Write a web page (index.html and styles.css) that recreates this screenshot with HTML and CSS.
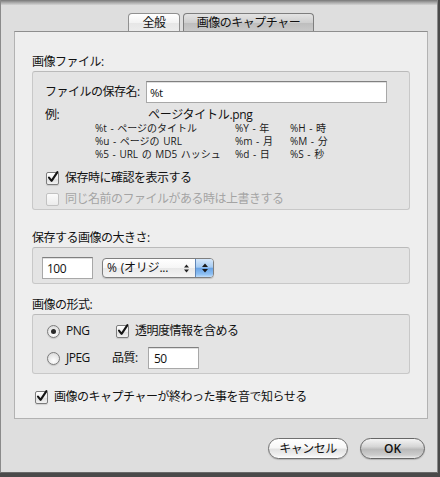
FILE: index.html
```html
<!DOCTYPE html>
<html lang="ja">
<head>
<meta charset="utf-8">
<title>画像のキャプチャー</title>
<link rel="stylesheet" href="styles.css">
</head>
<body>
<div class="window">
  <div class="titleshade"></div>
  <div class="tabs">
    <div class="tab tab-general">全般</div>
    <div class="tab tab-capture selected">画像のキャプチャー</div>
  </div>
  <div class="panel">
    <div class="group-title">画像ファイル:</div>
    <div class="box box-file">
      <div class="row-name">
        <span class="name-label">ファイルの保存名:</span>
        <div class="field field-name">%t</div>
      </div>
      <div class="row-example">
        <span class="ex-label">例:</span>
        <span class="ex-value">ページタイトル.png</span>
      </div>
      <div class="legend">
        <span>%t - ページのタイトル</span><span>%Y - 年</span><span>%H - 時</span>
        <span>%u - ページの URL</span><span>%m - 月</span><span>%M - 分</span>
        <span>%5 - URL の MD5 ハッシュ</span><span>%d - 日</span><span>%S - 秒</span>
      </div>
      <div class="check-row confirm-row">
        <span class="checkbox"><svg viewBox="0 0 13 13" width="13" height="13"><path d="M3 6.6 L5.6 9.8 L11.4 1.2" fill="none" stroke="#151515" stroke-width="2.1" stroke-linecap="round" stroke-linejoin="round"/></svg></span>
        <span>保存時に確認を表示する</span>
      </div>
      <div class="check-row overwrite-row disabled">
        <span class="checkbox"></span>
        <span>同じ名前のファイルがある時は上書きする</span>
      </div>
    </div>

    <div class="group-title title-size">保存する画像の大きさ:</div>
    <div class="box box-size">
      <div class="field field-size">100</div>
      <div class="popup">
        <span class="popup-text">% (オリジ...</span>
        <svg class="popup-mini" viewBox="0 0 5 9" width="5" height="9"><path d="M0 3.5 L2.5 0.5 L5 3.5Z M0 5.5 L2.5 8.5 L5 5.5Z" fill="#222"/></svg>
        <span class="popup-arrows"><svg viewBox="0 0 6 10" width="6" height="10"><path d="M0 4 L3 0.5 L6 4Z M0 6 L3 9.5 L6 6Z" fill="#1a1a1a"/></svg></span>
      </div>
    </div>

    <div class="group-title title-format">画像の形式:</div>
    <div class="box box-format">
      <div class="format-row">
        <div class="radio-cell"><span class="radio on"></span><span>PNG</span></div>
        <div class="check-row alpha-row">
          <span class="checkbox"><svg viewBox="0 0 13 13" width="13" height="13"><path d="M3 6.6 L5.6 9.8 L11.4 1.2" fill="none" stroke="#151515" stroke-width="2.1" stroke-linecap="round" stroke-linejoin="round"/></svg></span>
          <span>透明度情報を含める</span>
        </div>
      </div>
      <div class="format-row jpeg-row">
        <div class="radio-cell"><span class="radio"></span><span>JPEG</span></div>
        <span class="quality-label">品質:</span>
        <div class="field field-quality">50</div>
      </div>
    </div>

    <div class="check-row sound-row">
      <span class="checkbox"><svg viewBox="0 0 13 13" width="13" height="13"><path d="M3 6.6 L5.6 9.8 L11.4 1.2" fill="none" stroke="#151515" stroke-width="2.1" stroke-linecap="round" stroke-linejoin="round"/></svg></span>
      <span>画像のキャプチャーが終わった事を音で知らせる</span>
    </div>
  </div>

  <div class="buttons">
    <div class="btn btn-cancel">キャンセル</div>
    <div class="btn btn-ok">OK</div>
  </div>
</div>
</body>
</html>
```

FILE: styles.css
```css
* { box-sizing: border-box; }
html, body { margin: 0; padding: 0; }
body {
  width: 440px;
  height: 477px;
  overflow: hidden;
  background: #4a4a4a;
  font-family: "Open Sans", "Noto Sans CJK JP", sans-serif;
  font-size: 12px;
  letter-spacing: -0.5px;
  color: #111111;
}
.window {
  width: 438px;
  height: 473px;
  background: #dedede;
  border-left: 1px solid #8a8a8a;
  border-right: 1px solid #8a8a8a;
  border-bottom: 1px solid #6a6a6a;
  display: flex;
  flex-direction: column;
}
.titleshade {
  flex: none;
  height: 5px;
  background: linear-gradient(#777777, #a4a4a4 45%, #d4d4d4);
}
.tabs {
  flex: none;
  display: flex;
  justify-content: center;
  gap: 3px;
  width: 414px;
  height: 18px;
  margin: 8px 0 0 13px;
}
.tab {
  height: 18px;
  border: 1px solid #909090;
  border-bottom: none;
  border-radius: 4px 4px 0 0;
  background: linear-gradient(#ffffff, #f3f3f3 50%, #e6e6e6 51%, #ececec);
  display: flex;
  align-items: center;
  justify-content: center;
  line-height: 14px;
  color: #111;
}
.tab-general { width: 52px; }
.tab-capture { width: 131px; }
.tab.selected {
  background: linear-gradient(#e4e4e4, #cfcfcf 50%, #bdbdbd 51%, #c9c9c9);
  border-color: #7e7e7e;
}
.panel {
  flex: none;
  width: 414px;
  height: 388px;
  margin-left: 13px;
  background: #eeeeee;
  border: 1px solid #b2b2b2;
  border-top-color: #8e8e8e;
  padding: 23px 17px 0;
  display: flex;
  flex-direction: column;
}
.group-title {
  height: 14px;
  line-height: 14px;
  margin-bottom: 2px;
}
.title-size { margin-top: 21px; }
.title-format { margin-top: 14px; }
.box {
  flex: none;
  width: 378px;
  background: #e4e4e4;
  border: 1px solid #c8c8c8;
  border-top-color: #bababa;
  border-radius: 3px;
}
.box-file {
  height: 139px;
  padding: 9px 0 0 12px;
}
.row-name {
  display: flex;
  align-items: center;
  height: 22px;
}
.name-label { width: 101px; line-height: 14px; }
.field {
  background: #ffffff;
  border: 1px solid #a8a8a8;
  border-top-color: #808080;
  box-shadow: inset 0 1px 0 #e0e0e0;
  height: 22px;
  display: flex;
  align-items: center;
  font-size: 11.5px;
  color: #111;
}
.field-name { width: 241px; padding-left: 3px; }
.row-example {
  display: flex;
  margin-top: 5px;
  height: 14px;
  line-height: 14px;
}
.ex-label { width: 103px; }
.ex-value { letter-spacing: -0.3px; }
.legend {
  display: grid;
  grid-template-columns: 140px 55px auto;
  margin-left: 50px;
  font-size: 10px;
  line-height: 13px;
  letter-spacing: 0;
  word-spacing: 1px;
  color: #1a1a1a;
}
.check-row {
  display: flex;
  align-items: center;
  gap: 6px;
  height: 16px;
  line-height: 14px;
}
.confirm-row { margin: 9px 0 0 1px; }
.overwrite-row { margin: 5px 0 0 1px; }
.checkbox {
  flex: none;
  width: 13px;
  height: 13px;
  border: 1px solid #7c7c7c;
  border-radius: 2px;
  background: linear-gradient(#ffffff, #f0f0f0 50%, #dcdcdc 51%, #f2f2f2);
  box-shadow: 0 1px 1px rgba(0,0,0,0.12);
  position: relative;
}
.checkbox svg {
  position: absolute;
  left: -1px;
  top: -2px;
}
.disabled { color: #a4a4a4; }
.disabled .checkbox {
  border-color: #c2c2c2;
  background: linear-gradient(#fbfbfb, #ececec);
  box-shadow: none;
}
.box-size {
  height: 37px;
  padding: 9px 0 0 9px;
  display: flex;
  align-items: flex-start;
}
.field-size { width: 51px; padding-left: 4px; font-size: 12px; }
.popup {
  margin: 1px 0 0 9px;
  width: 112px;
  height: 20px;
  border: 1px solid #7f7f7f;
  border-radius: 4px;
  background: linear-gradient(#ffffff, #f6f6f6 50%, #e8e8e8 51%, #f4f4f4);
  box-shadow: 0 1px 1px rgba(0,0,0,0.15);
  display: flex;
  align-items: center;
  overflow: hidden;
}
.popup-text {
  padding-left: 4px;
  width: 81px;
  line-height: 14px;
  white-space: nowrap;
  letter-spacing: -0.2px;
  word-spacing: 1px;
}
.popup-mini { flex: none; }
.popup-arrows {
  margin-left: auto;
  width: 18px;
  height: 100%;
  border-left: 1px solid #5f86b8;
  background: linear-gradient(#d6e8fb, #a6cbf2 45%, #6aa4e6 52%, #8ec0f3 85%, #c2defa);
  display: flex;
  align-items: center;
  justify-content: center;
}
.box-format {
  height: 60px;
  padding: 7px 0 0 14px;
}
.format-row {
  display: flex;
  align-items: center;
  height: 18px;
}
.jpeg-row { margin-top: 7px; height: 22px; }
.radio-cell {
  width: 65px;
  display: flex;
  align-items: center;
  gap: 6px;
  line-height: 14px;
}
.radio {
  flex: none;
  width: 13px;
  height: 13px;
  border: 1px solid #7c7c7c;
  border-radius: 50%;
  background: radial-gradient(circle at 50% 70%, #ffffff, #e6e6e6 60%, #d2d2d2);
  box-shadow: 0 1px 1px rgba(0,0,0,0.12);
  display: flex;
  align-items: center;
  justify-content: center;
}
.radio.on::after {
  content: "";
  width: 5px;
  height: 5px;
  border-radius: 50%;
  background: #2a2a2a;
}
.alpha-row { margin-left: 4px; }
.quality-label { width: 36px; line-height: 14px; }
.field-quality { width: 51px; padding-left: 5px; font-size: 12px; }
.sound-row { margin: 15px 0 0 3px; }
.buttons {
  flex: none;
  display: flex;
  justify-content: flex-end;
  gap: 12px;
  margin-top: 19px;
  padding-right: 12px;
}
.btn {
  height: 21px;
  border: 1px solid #707070;
  border-radius: 11px;
  background: linear-gradient(#ffffff, #f7f7f7 45%, #e2e2e2 55%, #f0f0f0 85%, #ffffff);
  box-shadow: 0 1px 1px rgba(0,0,0,0.18);
  display: flex;
  align-items: center;
  justify-content: center;
  line-height: 14px;
  color: #111;
}
.btn-cancel { width: 80px; }
.btn-ok {
  width: 65px;
  font-weight: 600;
  letter-spacing: 0;
  background: linear-gradient(#f4f4f4, #d6d6d6 40%, #bababa 55%, #cdcdcd 85%, #ececec);
  border-color: #666666;
}
```
